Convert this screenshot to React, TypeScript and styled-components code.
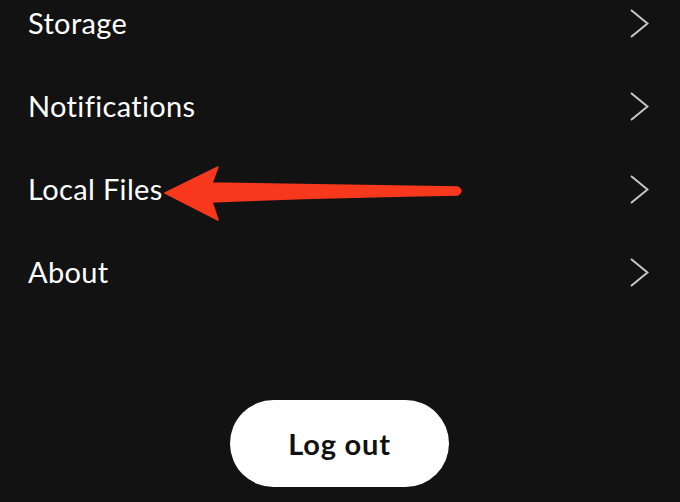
import React from "react";
import styled, { createGlobalStyle } from "styled-components";

const Global = createGlobalStyle`
  html, body { margin: 0; padding: 0; background: #121212; }
  body { width: 680px; height: 502px; overflow: hidden; font-family: Lato, "Noto Sans", sans-serif; }
`;

const Screen = styled.div`
  position: relative;
  width: 680px;
  height: 502px;
  background: #121212;
  overflow: hidden;
  display: flex;
  flex-direction: column;
`;

const List = styled.ul`
  list-style: none;
  margin: -18px 0 0;
  padding: 0;
  display: flex;
  flex-direction: column;
`;

const Row = styled.li`
  height: 83px;
  display: flex;
  align-items: center;
  justify-content: space-between;
  padding: 0 31px 0 28px;
`;

const Label = styled.span`
  color: #ffffff;
  font-size: 29px;
  font-weight: 400;
  letter-spacing: 0.35px;
  margin-top: -2px;
`;

const Footer = styled.div`
  display: flex;
  justify-content: center;
  padding-top: 86px;
`;

const LogoutButton = styled.button`
  width: 219px;
  height: 87px;
  border: none;
  border-radius: 44px;
  background: #ffffff;
  color: #111111;
  font-family: Lato, "Noto Sans", sans-serif;
  font-size: 29px;
  font-weight: 700;
  letter-spacing: 0.8px;
  margin-left: -1px;
`;

const ArrowOverlay = styled.svg`
  position: absolute;
  left: 0;
  top: 0;
  pointer-events: none;
`;

const Chevron = () => (
  <svg width="19" height="29" viewBox="0 0 19 29">
    <path d="M1 1 L17.5 14.5 L1 28" fill="none" stroke="#c8c8c8" strokeWidth="2" />
  </svg>
);

const items = ["Storage", "Notifications", "Local Files", "About"];

export default function App() {
  return (
    <>
      <Global />
      <Screen>
        <List>
          {items.map((t) => (
            <Row key={t}>
              <Label>{t}</Label>
              <Chevron />
            </Row>
          ))}
        </List>
        <Footer>
          <LogoutButton>Log out</LogoutButton>
        </Footer>
        <ArrowOverlay width="680" height="502" viewBox="0 0 680 502">
          <path
            d="M165 193 L218 167 L212 183 Q330 185 458 187 Q464 191 458 195 Q330 197 212 202 L218 220 Z"
            fill="#f7381c"
            stroke="#f7381c"
            strokeWidth="1.5"
            strokeLinejoin="round"
          />
        </ArrowOverlay>
      </Screen>
    </>
  );
}
